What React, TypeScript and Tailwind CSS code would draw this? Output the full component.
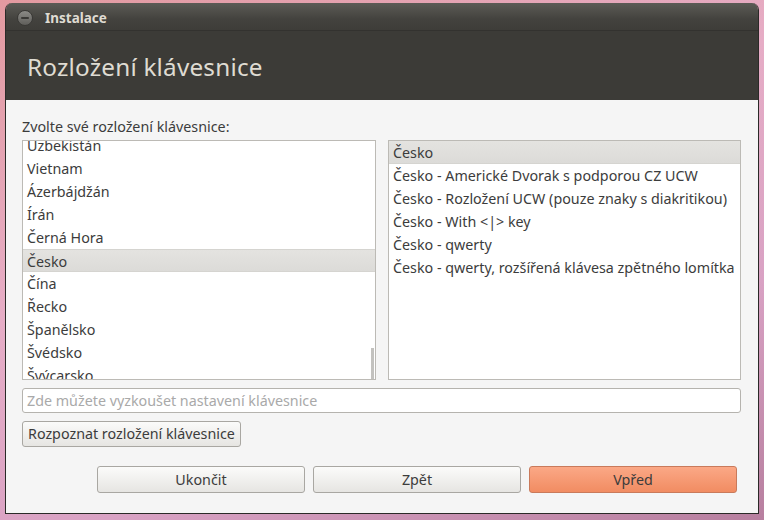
import React from "react";

const leftItems = [
  "Uzbekistán",
  "Vietnam",
  "Ázerbájdžán",
  "Írán",
  "Černá Hora",
  "Česko",
  "Čína",
  "Řecko",
  "Španělsko",
  "Švédsko",
  "Švýcarsko",
];

const rightItems = [
  "Česko",
  "Česko - Americké Dvorak s podporou CZ UCW",
  "Česko - Rozložení UCW (pouze znaky s diakritikou)",
  "Česko - With <|> key",
  "Česko - qwerty",
  "Česko - qwerty, rozšířená klávesa zpětného lomítka",
];

export default function App() {
  return (
    <div className="w-[764px] h-[520px] overflow-hidden bg-[linear-gradient(160deg,#e39aa0_0%,#e6adc6_40%,#d9a2c4_70%,#b77f9f_100%)] pt-[3px] pl-[5px] pr-[5px] pb-[6px] font-['Noto_Sans',sans-serif] text-[14.3px] text-[#3c3c3c]">
      <div className="flex flex-col h-full rounded-t-[7px] overflow-hidden border-x border-b border-[#2b2a28]">
        {/* title bar */}
        <div className="h-[28px] pt-[3px] flex items-center bg-[linear-gradient(#5c5b56,#43423e_60%,#3e3d39)] border-b border-[#33322f]">
          <div className="ml-[11px] w-[16px] h-[16px] rounded-full bg-[linear-gradient(#8b8a86,#5f5e5a)] border border-[#3a3936] flex items-center justify-center">
            <div className="w-[8px] h-[2px] bg-[#3a3936] rounded-sm" />
          </div>
          <span className="ml-[12px] text-[13.5px] font-bold text-[#dfdbd2]">Instalace</span>
        </div>
        {/* header */}
        <div className="h-[69px] pt-[3px] bg-[#3c3b37] flex items-center pl-[21px]">
          <span className="text-[24.3px] text-[#dfdbd2] tracking-[0.2px]">Rozložení klávesnice</span>
        </div>
        {/* content */}
        <div className="flex-1 bg-[#f5f5f5] pl-[16px] pr-[16px] flex flex-col">
          <div className="mt-[17px] h-[20px] leading-[20px]">Zvolte své rozložení klávesnice:</div>
          <div className="mt-[3px] flex gap-[12px]">
            <div className="relative w-[354px] h-[240px] bg-white border border-[#bcbab5] overflow-hidden">
              <div className="-mt-[7px]">
                {leftItems.map((t) => (
                  <div
                    key={t}
                    className={
                      t === "Česko"
                        ? "h-[23px] leading-[23px] pl-[4px] bg-[linear-gradient(#e4e3e0,#dcdbd8)] border-y border-[#d5d4d0]"
                        : "h-[23px] leading-[23px] pl-[4px]"
                    }
                  >
                    {t}
                  </div>
                ))}
              </div>
              <div className="absolute right-[1px] top-[207px] w-[3px] h-[31px] bg-[#c3c2bf]" />
            </div>
            <div className="w-[353px] h-[240px] bg-white border border-[#bcbab5] overflow-hidden">
              {rightItems.map((t, i) => (
                <div
                  key={t}
                  className={
                    i === 0
                      ? "h-[23px] leading-[23px] pl-[4px] bg-[linear-gradient(#e4e3e0,#dcdbd8)] border-b border-[#d5d4d0]"
                      : "h-[23px] leading-[23px] pl-[4px]"
                  }
                >
                  {t}
                </div>
              ))}
            </div>
          </div>
          <div className="mt-[8px] w-[719px] h-[25px] bg-white border border-[#b5b3ae] rounded-[3px] flex items-center pl-[4px] text-[#a9a9a9]">
            Zde můžete vyzkoušet nastavení klávesnice
          </div>
          <div className="mt-[8px]">
            <button className="h-[26px] px-[5px] border border-[#a9a7a2] rounded-[3px] bg-[linear-gradient(#fbfbfa,#e6e5e2)] text-[14.3px] text-[#3c3c3c]">
              Rozpoznat rozložení klávesnice
            </button>
          </div>
          <div className="mt-[19px] flex justify-end gap-[8px] pr-[5px]">
            <button className="w-[208px] h-[27px] border border-[#a9a7a2] rounded-[3px] bg-[linear-gradient(#fbfbfa,#e6e5e2)] text-[#3c3c3c]">
              Ukončit
            </button>
            <button className="w-[208px] h-[27px] border border-[#a9a7a2] rounded-[3px] bg-[linear-gradient(#fbfbfa,#e6e5e2)] text-[#3c3c3c]">
              Zpět
            </button>
            <button className="w-[208px] h-[27px] border border-[#c97a5b] rounded-[3px] bg-[linear-gradient(#fba886,#f18c62)] text-[#3c3c3c]">
              Vpřed
            </button>
          </div>
        </div>
      </div>
    </div>
  );
}
